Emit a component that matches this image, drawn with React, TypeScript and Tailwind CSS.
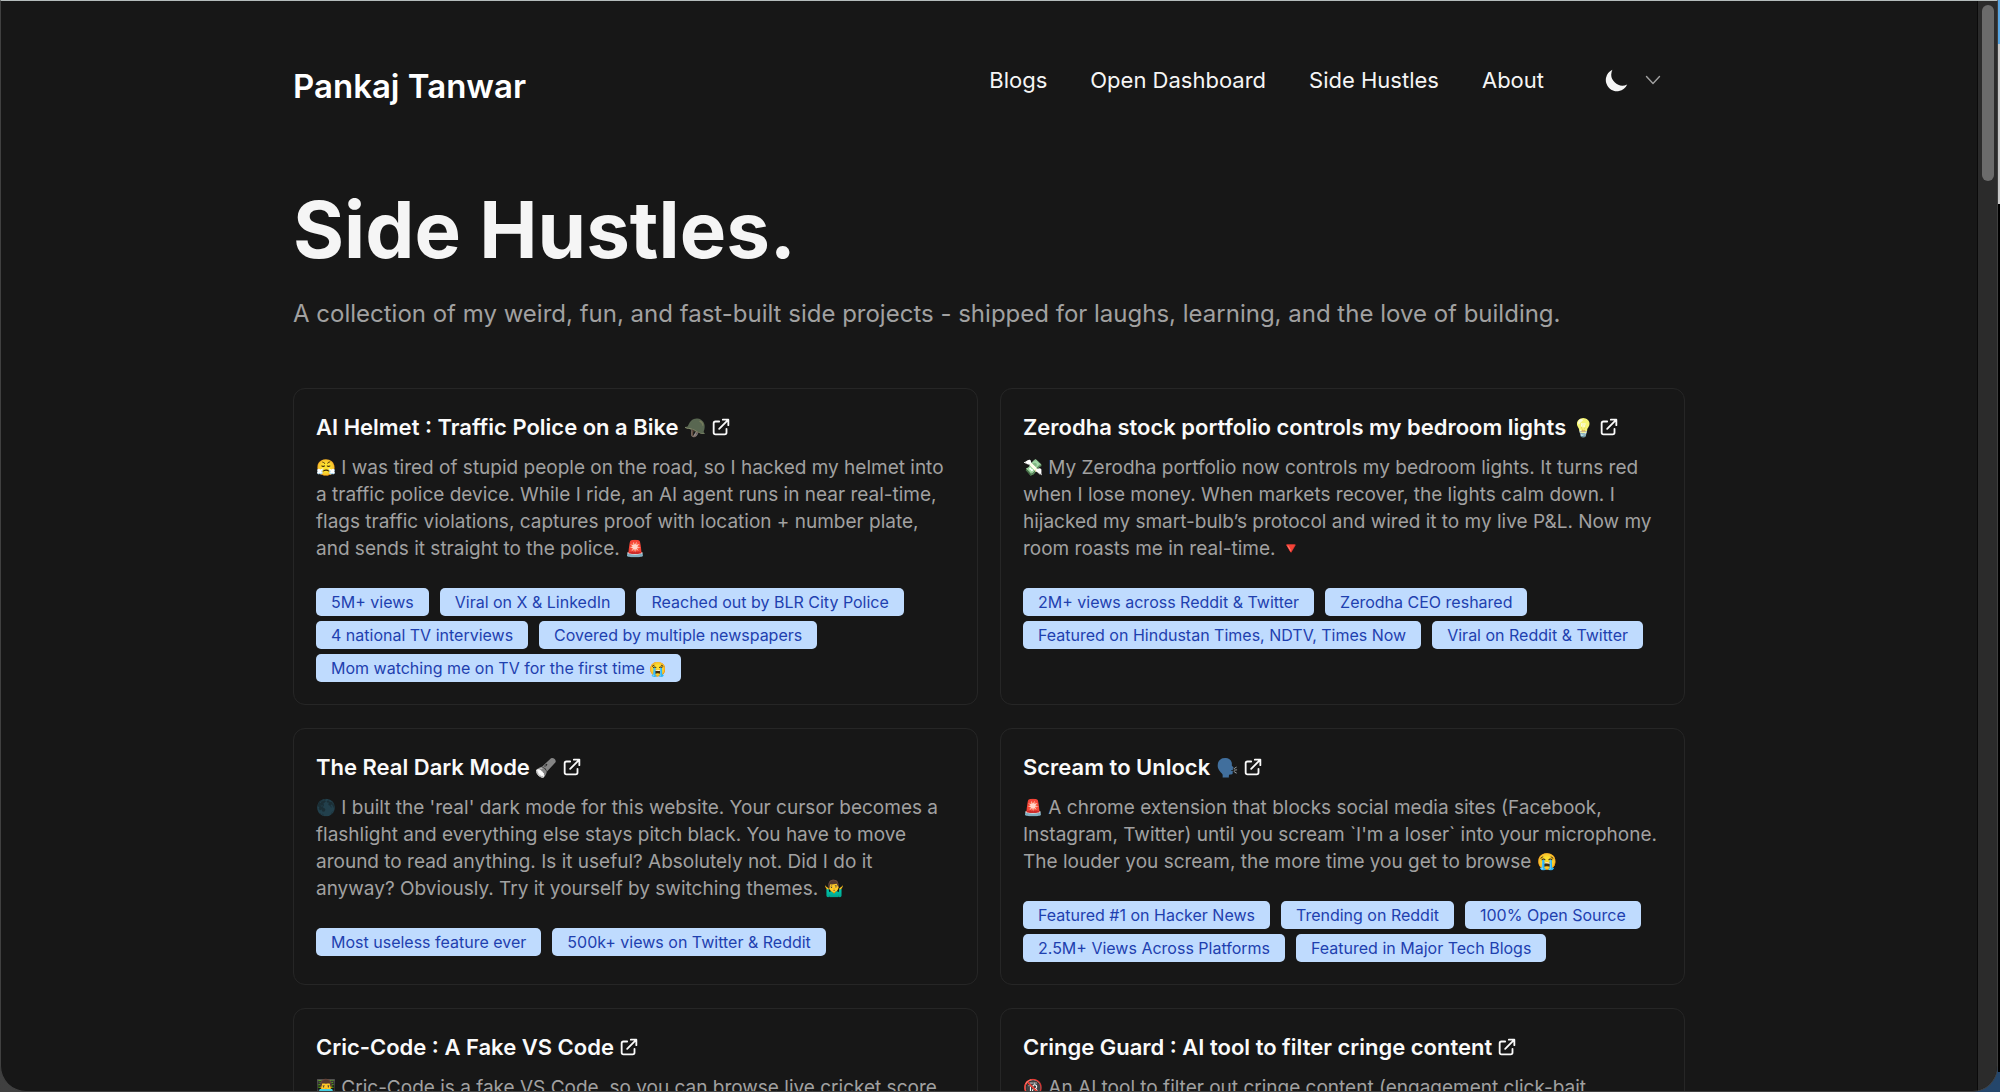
import type { ReactNode } from 'react';

type Project = {
  title: string;
  titleEmoji?: ReactNode;
  body: ReactNode;
  tags: ReactNode[];
};

function Emoji({ children, className = '' }: { children: ReactNode; className?: string }) {
  return <span className={`inline-block align-[1px] text-[16px] leading-none ${className}`}>{children}</span>;
}

function TitleEmoji({ children, className = '' }: { children: ReactNode; className?: string }) {
  return <span className={`inline-block align-[1px] text-[18px] leading-none ${className}`}>{children}</span>;
}

const projects: Project[] = [
  {
    title: 'AI Helmet : Traffic Police on a Bike',
    titleEmoji: <TitleEmoji className="-scale-x-100 saturate-50">🪖</TitleEmoji>,
    body: (
      <>
        <Emoji>😤</Emoji> I was tired of stupid people on the road, so I hacked my helmet into a traffic police device.
        While I ride, an AI agent runs in near real-time, flags traffic violations, captures proof with location +
        number plate, and sends it straight to the police. <Emoji>🚨</Emoji>
      </>
    ),
    tags: [
      '5M+ views',
      'Viral on X & LinkedIn',
      'Reached out by BLR City Police',
      '4 national TV interviews',
      'Covered by multiple newspapers',
      <>
        Mom watching me on TV for the first time <span className="text-[14px] leading-none">😭</span>
      </>,
    ],
  },
  {
    title: 'Zerodha stock portfolio controls my bedroom lights',
    titleEmoji: <TitleEmoji className="brightness-125 saturate-50">💡</TitleEmoji>,
    body: (
      <>
        <Emoji className="brightness-125 saturate-50">💸</Emoji> My Zerodha portfolio now controls my bedroom lights. It
        turns red when I lose money. When markets recover, the lights calm down. I hijacked my smart-bulb’s protocol and
        wired it to my live P&amp;L. Now my room roasts me in real-time. <Emoji>🔻</Emoji>
      </>
    ),
    tags: [
      '2M+ views across Reddit & Twitter',
      'Zerodha CEO reshared',
      'Featured on Hindustan Times, NDTV, Times Now',
      'Viral on Reddit & Twitter',
    ],
  },
  {
    title: 'The Real Dark Mode',
    titleEmoji: <TitleEmoji className="-rotate-90 brightness-125 grayscale">🔦</TitleEmoji>,
    body: (
      <>
        <Emoji>🌑</Emoji> I built the 'real' dark mode for this website. Your cursor becomes a flashlight and everything
        else stays pitch black. You have to move around to read anything. Is it useful? Absolutely not. Did I do it
        anyway? Obviously. Try it yourself by switching themes. <Emoji>🤷‍♂️</Emoji>
      </>
    ),
    tags: ['Most useless feature ever', '500k+ views on Twitter & Reddit'],
  },
  {
    title: 'Scream to Unlock',
    titleEmoji: <TitleEmoji className="saturate-50">🗣️</TitleEmoji>,
    body: (
      <>
        <Emoji>🚨</Emoji> A chrome extension that blocks social media sites (Facebook, Instagram, Twitter) until you
        scream `I'm a loser` into your microphone. The louder you scream, the more time you get to browse{' '}
        <Emoji>😭</Emoji>
      </>
    ),
    tags: [
      'Featured #1 on Hacker News',
      'Trending on Reddit',
      '100% Open Source',
      '2.5M+ Views Across Platforms',
      'Featured in Major Tech Blogs',
    ],
  },
  {
    title: 'Cric-Code : A Fake VS Code',
    body: (
      <>
        <Emoji>👨‍💻</Emoji> Cric-Code is a fake VS Code, so you can browse live cricket score
      </>
    ),
    tags: [],
  },
  {
    title: 'Cringe Guard : AI tool to filter cringe content',
    body: (
      <>
        <Emoji>🔞</Emoji> An AI tool to filter out cringe content (engagement click-bait,
      </>
    ),
    tags: [],
  },
];

const links = ['Blogs', 'Open Dashboard', 'Side Hustles', 'About'];

function ExternalLinkIcon() {
  return (
    <svg className="size-[22px] shrink-0" viewBox="0 0 24 24" fill="none" stroke="currentColor" aria-hidden="true">
      <path
        strokeLinecap="round"
        strokeLinejoin="round"
        strokeWidth="2"
        d="M10 6H6a2 2 0 0 0-2 2v10a2 2 0 0 0 2 2h10a2 2 0 0 0 2-2v-4M14 4h6m0 0v6m0-6L10 14"
      />
    </svg>
  );
}

function ProjectCard({ project }: { project: Project }) {
  return (
    <article className="rounded-xl border border-neutral-800 p-[22px]">
      <h2 className="text-[22px] leading-8 font-semibold text-neutral-50">
        <a href="#project" className="flex items-center gap-1">
          <span>
            {project.title}
            {project.titleEmoji ? <> {project.titleEmoji}</> : null}
          </span>
          <ExternalLinkIcon />
        </a>
      </h2>
      <p className="mt-[11px] text-[19px] leading-[27px] text-[#a1a1a1]">{project.body}</p>
      {project.tags.length > 0 && (
        <ul className="mt-[26px] flex flex-wrap gap-x-[11px] gap-y-[5px]">
          {project.tags.map((tag, i) => (
            <li key={i} className="h-7 rounded-[5px] bg-[#bfdbfe] px-[15px] text-[16px] leading-7 text-[#1e40af]">
              {tag}
            </li>
          ))}
        </ul>
      )}
    </article>
  );
}

export default function App() {
  return (
    <div className="flex h-screen overflow-hidden bg-linear-to-r from-neutral-700 to-[#24466b] font-[Inter,sans-serif]">
      <div className="flex min-w-0 flex-1 overflow-hidden rounded-b-[26px] border border-neutral-700 border-t-[#b5bcbc] bg-neutral-900">
        <div className="min-w-0 flex-1 overflow-hidden px-8">
          <div className="mx-auto max-w-[1392px]">
            <header className="flex items-start justify-between pt-[62px]">
              <a href="#home" className="text-[33px] leading-[46px] font-semibold text-white">
                Pankaj Tanwar
              </a>
              <div className="flex items-center pr-6">
                <nav className="flex gap-[43px] text-[22px] leading-[34px] text-neutral-100">
                  {links.map((link) => (
                    <a key={link} href="#nav">
                      {link}
                    </a>
                  ))}
                </nav>
                <button type="button" aria-label="Theme" className="ml-[59px] flex items-center gap-[14px]">
                  <svg className="size-7 text-neutral-100" viewBox="0 0 20 20" fill="currentColor" aria-hidden="true">
                    <path d="M17.293 13.293A8 8 0 0 1 6.707 2.707a8.001 8.001 0 1 0 10.586 10.586z" />
                  </svg>
                  <svg
                    className="h-[10px] w-4 text-neutral-400"
                    viewBox="0 0 16 10"
                    fill="none"
                    stroke="currentColor"
                    strokeWidth="1.4"
                    strokeLinecap="round"
                    strokeLinejoin="round"
                    aria-hidden="true"
                  >
                    <path d="m1.5 1.5 6.5 7 6.5-7" />
                  </svg>
                </button>
              </div>
            </header>
            <main>
              <h1 className="mt-20 text-[78px] leading-[82px] font-bold text-neutral-100">Side Hustles.</h1>
              <p className="mt-6 text-[24px] leading-[38px] text-[#a1a1a1]">
                A collection of my weird, fun, and fast-built side projects - shipped for laughs, learning, and the
                love of building.
              </p>
              <section className="mt-[55px] grid grid-cols-2 gap-x-[22px] gap-y-[23px]">
                {projects.map((project) => (
                  <ProjectCard key={project.title} project={project} />
                ))}
              </section>
            </main>
          </div>
        </div>
        <div className="w-5 shrink-0 border-l border-neutral-950 bg-[#2b2b2b] pt-1 pl-1" aria-hidden="true">
          <div className="h-44 w-3 rounded-full bg-[#6b6b6b]" />
        </div>
      </div>
      <div className="flex w-0.5 shrink-0 flex-col" aria-hidden="true">
        <div className="h-11 bg-[#5aa9e6]" />
        <div className="h-40 bg-[#c9c9c9]" />
        <div className="flex-1 bg-black" />
        <div className="h-5 bg-[#24466b]" />
      </div>
    </div>
  );
}
